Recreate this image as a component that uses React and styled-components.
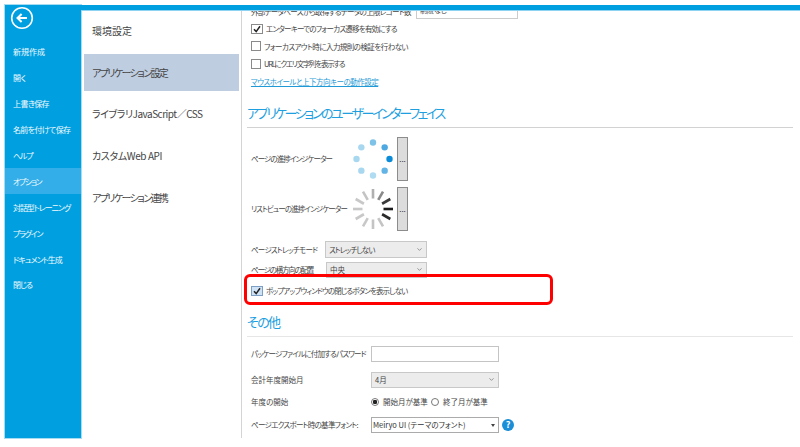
import React from "react";
import styled, { createGlobalStyle } from "styled-components";
import { ChevronDown } from "lucide-react";

// [label, letter spacing] : the original UI font has much narrower kana than Noto
const sideItems = [
  ["新規作成", 0], ["開く", -0.4], ["上書き保存", -0.6], ["名前を付けて保存", -0.65], ["ヘルプ", -1.2],
  ["オプション", -1.4], ["対話型トレーニング", -1.1], ["プラグイン", -1.3], ["ドキュメント生成", -1], ["閉じる", -1],
];
const navItems = [
  ["環境設定", 0], ["アプリケーション設定", -1.6], ["ライブラリJavaScript／CSS", -0.5], ["カスタムWeb API", -0.4], ["アプリケーション連携", -1.6],
];
const dotColors = ["#0a8cd8", "#62b4e4", "#b0dcf2", "#a8d7f0", "#a8d7f0", "#a8d7f0", "#7fc2e8", "#4da9e0"];
const spokeColors = ["#1c1c1c", "#2a2a2a", "#c4c4c4", "#c4c4c4", "#c8c8c8", "#c8c8c8", "#c8c8c8", "#c8c8c8", "#c4c4c4", "#b0b0b0", "#8a8a8a", "#3a3a3a"];

function DotSpinner() {
  return (
    <svg width="44" height="44" viewBox="-22 -22 44 44">
      {dotColors.map((c, i) => {
        const a = (i * Math.PI) / 4;
        return <circle key={i} cx={16.5 * Math.cos(a)} cy={16.5 * Math.sin(a)} r="3.2" fill={c} />;
      })}
    </svg>
  );
}

function BarSpinner() {
  return (
    <svg width="44" height="44" viewBox="-22 -22 44 44">
      {spokeColors.map((c, i) => (
        <rect key={i} x="10.5" y="-1.3" width="9.5" height="2.6" fill={c} transform={`rotate(${i * 30})`} />
      ))}
    </svg>
  );
}

function Check({ on, hot, ls, children }) {
  return (
    <CheckRow>
      <CheckBox $hot={hot}>
        {on && (
          <svg width="10" height="10" viewBox="0 0 10 10">
            <path d="M2 5.2 L4.2 7.6 L8 2.2" fill="none" stroke="#222" strokeWidth="1.5" />
          </svg>
        )}
      </CheckBox>
      <Squeezed $ls={ls}>{children}</Squeezed>
    </CheckRow>
  );
}

function Select({ width, ls, children }) {
  return (
    <SelectBox $width={width}>
      <Squeezed $ls={ls}>{children}</Squeezed>
      <ChevronDown size={7} strokeWidth={2.5} />
    </SelectBox>
  );
}

export default function App() {
  return (
    <Page>
      <GlobalStyle />
      <Sidebar>
        <BackButton>
          <svg width="24" height="24" viewBox="0 0 24 24">
            <circle cx="12" cy="12" r="10.3" fill="none" stroke="#fff" strokeWidth="1.6" />
            <path d="M17 12 H8 M11.6 8 L7.5 12 L11.6 16" fill="none" stroke="#fff" strokeWidth="2" />
          </svg>
        </BackButton>
        {sideItems.map(([t, ls]) => (
          <SideItem key={t} $active={t === "オプション"}>
            <Squeezed $ls={ls}>{t}</Squeezed>
          </SideItem>
        ))}
      </Sidebar>
      <Main>
        <TopBar />
        <Body>
          <Nav>
            {navItems.map(([t, ls]) => (
              <NavItem key={t} $active={t === "アプリケーション設定"}>
                <Squeezed $ls={ls}>{t}</Squeezed>
              </NavItem>
            ))}
          </Nav>
          <Content>
            <ClippedRow>
              <Squeezed $ls={-0.7}>外部データベースから取得するデータの上限レコード数</Squeezed>
              <ClippedInput>制限なし</ClippedInput>
            </ClippedRow>
            <Check on ls={-0.76}>エンターキーでのフォーカス遷移を有効にする</Check>
            <Check ls={-0.55}>フォーカスアウト時に入力規則の検証を行わない</Check>
            <Check ls={-1.27}>URLにクエリ文字列を表示する</Check>
            <LinkRow>マウスホイールと上下方向キーの動作設定</LinkRow>

            <Heading $height={37} $pad={4} $ls={-2.35}>アプリケーションのユーザーインターフェイス</Heading>
            <IndicatorRow $top={9}>
              <IndicatorLabel><Squeezed $ls={-0.95}>ページの進捗インジケーター</Squeezed></IndicatorLabel>
              <DotSpinner />
              <MoreButton>...</MoreButton>
            </IndicatorRow>
            <IndicatorRow $top={6}>
              <IndicatorLabel><Squeezed $ls={-0.9}>リストビューの進捗インジケーター</Squeezed></IndicatorLabel>
              <BarSpinner />
              <MoreButton>...</MoreButton>
            </IndicatorRow>
            <SelectRow $top={10} $height={17}>
              <SelectLabel $width={74}><Squeezed $ls={-0.75}>ページストレッチモード</Squeezed></SelectLabel>
              <Select width={102} ls={-0.9}>ストレッチしない</Select>
            </SelectRow>
            <SelectRow $top={4} $height={16}>
              <SelectLabel $width={75}><Squeezed $ls={-1.2}>ページの横方向の配置</Squeezed></SelectLabel>
              <Select width={101}>中央</Select>
            </SelectRow>
            <PopupRow>
              <Check on hot ls={-0.9}>ポップアップウィンドウの閉じるボタンを表示しない</Check>
              <RedFrame />
            </PopupRow>

            <Heading $height={38} $pad={4} $ls={-1.6} $light>その他</Heading>
            <SelectRow $top={9} $height={16}>
              <SelectLabel $width={120}><Squeezed $ls={-0.8}>パッケージファイルに付加するパスワード</Squeezed></SelectLabel>
              <TextBox />
            </SelectRow>
            <SelectRow $top={10} $height={16}>
              <SelectLabel $width={120}>会計年度開始月</SelectLabel>
              <Select width={128}>4月</Select>
            </SelectRow>
            <SelectRow $top={6} $height={16}>
              <SelectLabel $width={120}>年度の開始</SelectLabel>
              <RadioGroup>
                <Radio $on />
                <RadioText>開始月が基準</RadioText>
                <Radio />
                <RadioText>終了月が基準</RadioText>
              </RadioGroup>
            </SelectRow>
            <SelectRow $top={7} $height={16}>
              <SelectLabel $width={120}><Squeezed $ls={-0.7}>ページエクスポート時の基準フォント:</Squeezed></SelectLabel>
              <FontSelect>
                Meiryo UI (テーマのフォント)
                <Caret />
              </FontSelect>
              <HelpIcon>?</HelpIcon>
            </SelectRow>
          </Content>
        </Body>
      </Main>
    </Page>
  );
}

const GlobalStyle = createGlobalStyle`
  html, body {
    margin: 0;
    padding: 0;
    background: #fff;
  }
  body {
    font-family: "Noto Sans CJK JP", "Liberation Sans", sans-serif;
    font-feature-settings: "palt";
    color: #444;
  }
`;

const Squeezed = styled.span`
  letter-spacing: ${(p) => p.$ls || 0}px;
  white-space: nowrap;
`;

const Page = styled.div`
  display: flex;
  width: 800px;
  height: 447px;
  padding: 5px 0 9px 5px;
  box-sizing: border-box;
  overflow: hidden;
`;

const Sidebar = styled.div`
  flex: 0 0 76px;
  background: #00a0e0;
  box-shadow: 0 0 0 1px #a6dcf2;
`;

const BackButton = styled.div`
  display: flex;
  align-items: flex-start;
  height: 34px;
  padding: 1px 0 0 5px;
  box-sizing: border-box;
`;

const SideItem = styled.div`
  display: flex;
  align-items: center;
  height: 25.9px;
  padding-left: 8px;
  font-size: 8px;
  color: #f2fafe;
  background: ${(p) => (p.$active ? "#33aee8" : "transparent")};
`;

const Main = styled.div`
  flex: 1;
  display: flex;
  flex-direction: column;
  min-width: 0;
`;

const TopBar = styled.div`
  flex: 0 0 5px;
  background: #00a0e0;
  border-bottom: 1px solid #8ed4f2;
`;

const Body = styled.div`
  flex: 1;
  display: flex;
  min-height: 0;
`;

const Nav = styled.div`
  flex: 0 0 161px;
  box-sizing: border-box;
  display: flex;
  flex-direction: column;
  gap: 4.7px;
  padding: 1px 2px 0 3px;
  border-right: 1px solid #d4d4d4;
`;

const NavItem = styled.div`
  display: flex;
  align-items: center;
  height: 37px;
  padding-left: 8px;
  font-size: 10px;
  background: ${(p) => (p.$active ? "#bfcde0" : "transparent")};
`;

const Content = styled.div`
  flex: 1;
  min-width: 0;
  overflow: hidden;
  padding: 0 7px 0 5px;
  font-size: 7.5px;
`;

const ClippedRow = styled.div`
  display: flex;
  align-items: center;
  gap: 5px;
  height: 16px;
  margin-top: -8px;
  padding: 0 0 1px 4px;
`;

const ClippedInput = styled.div`
  width: 102px;
  height: 16px;
  box-sizing: border-box;
  padding: 1px 3px;
  border: 1px solid #ccc;
  font-size: 7px;
`;

const CheckRow = styled.div`
  display: flex;
  align-items: center;
  gap: 3px;
  height: 17.6px;
  padding-left: 4px;
`;

const CheckBox = styled.span`
  flex: 0 0 10px;
  height: 10px;
  box-sizing: border-box;
  display: flex;
  align-items: center;
  justify-content: center;
  border: 1px solid ${(p) => (p.$hot ? "#7e9fc4" : "#8a8a8a")};
  background: ${(p) => (p.$hot ? "#cfe3f6" : "#fff")};

  svg {
    flex: none;
  }
`;

const LinkRow = styled.div`
  display: flex;
  align-items: center;
  height: 18px;
  padding-left: 4px;
  color: #1f9ad6;
  text-decoration: underline;
  letter-spacing: -0.5px;
`;

const Heading = styled.div`
  display: flex;
  align-items: flex-end;
  height: ${(p) => p.$height}px;
  box-sizing: border-box;
  padding-bottom: ${(p) => p.$pad}px;
  border-bottom: 1px solid ${(p) => (p.$light ? "#e6e6e6" : "#d2d2d2")};
  font-size: 13px;
  line-height: 20px;
  letter-spacing: ${(p) => p.$ls}px;
  white-space: nowrap;
  color: #1ea0e0;
`;

const IndicatorRow = styled.div`
  display: flex;
  align-items: center;
  height: 44px;
  margin-top: ${(p) => p.$top}px;
  padding-left: 4px;
`;

const IndicatorLabel = styled.div`
  flex: 0 0 100px;
  white-space: nowrap;
`;

const MoreButton = styled.div`
  flex: 0 0 11px;
  height: 44px;
  margin-left: 2px;
  box-sizing: border-box;
  display: flex;
  align-items: center;
  justify-content: center;
  border: 1px solid #8c8c8c;
  background: #dcdcdc;
  font-size: 8px;
  color: #333;
`;

const SelectRow = styled.div`
  display: flex;
  align-items: center;
  height: ${(p) => p.$height}px;
  margin-top: ${(p) => p.$top}px;
  padding-left: 4px;
`;

const SelectLabel = styled.div`
  flex: 0 0 ${(p) => p.$width}px;
  white-space: nowrap;
`;

const SelectBox = styled.div`
  width: ${(p) => p.$width}px;
  height: 100%;
  box-sizing: border-box;
  display: flex;
  align-items: center;
  justify-content: space-between;
  padding: 0 3px 0 3px;
  border: 1px solid #c8c8c8;
  background: #ececec;
  color: #444;

  svg {
    color: #777;
  }
`;

const PopupRow = styled.div`
  position: relative;
  margin-top: 4px;
  height: 17px;
`;

const RedFrame = styled.div`
  position: absolute;
  left: -3px;
  top: -8px;
  width: 309px;
  height: 31px;
  box-sizing: border-box;
  border: 3px solid #f00;
  border-radius: 6px;
  pointer-events: none;
`;

const TextBox = styled.div`
  width: 128px;
  height: 100%;
  box-sizing: border-box;
  border: 1px solid #c4c4c4;
  background: #fff;
`;

const RadioGroup = styled.div`
  display: flex;
  align-items: center;
`;

const Radio = styled.span`
  flex: 0 0 8px;
  height: 8px;
  box-sizing: border-box;
  border: 1px solid #777;
  border-radius: 50%;
  background: ${(p) => (p.$on ? "radial-gradient(circle, #222 0 2px, #fff 2.4px)" : "#fff")};
`;

const RadioText = styled.span`
  flex: 0 0 49px;
  box-sizing: border-box;
  padding-left: 4px;
  margin-right: 3px;
  white-space: nowrap;
`;

const FontSelect = styled.div`
  position: relative;
  width: 128px;
  height: 100%;
  box-sizing: border-box;
  display: flex;
  align-items: center;
  padding-left: 1px;
  border: 1px solid #ababab;
  background: #fff;
  white-space: nowrap;
  color: #333;
`;

const Caret = styled.span`
  position: absolute;
  right: 3px;
  top: 6px;
  border-left: 2px solid transparent;
  border-right: 2px solid transparent;
  border-top: 3px solid #444;
`;

const HelpIcon = styled.span`
  flex: 0 0 12px;
  height: 12px;
  margin-left: 3px;
  display: flex;
  align-items: center;
  justify-content: center;
  border-radius: 50%;
  background: #1a8fd8;
  color: #fff;
  font-size: 9px;
  font-weight: 700;
  line-height: 1;
`;
